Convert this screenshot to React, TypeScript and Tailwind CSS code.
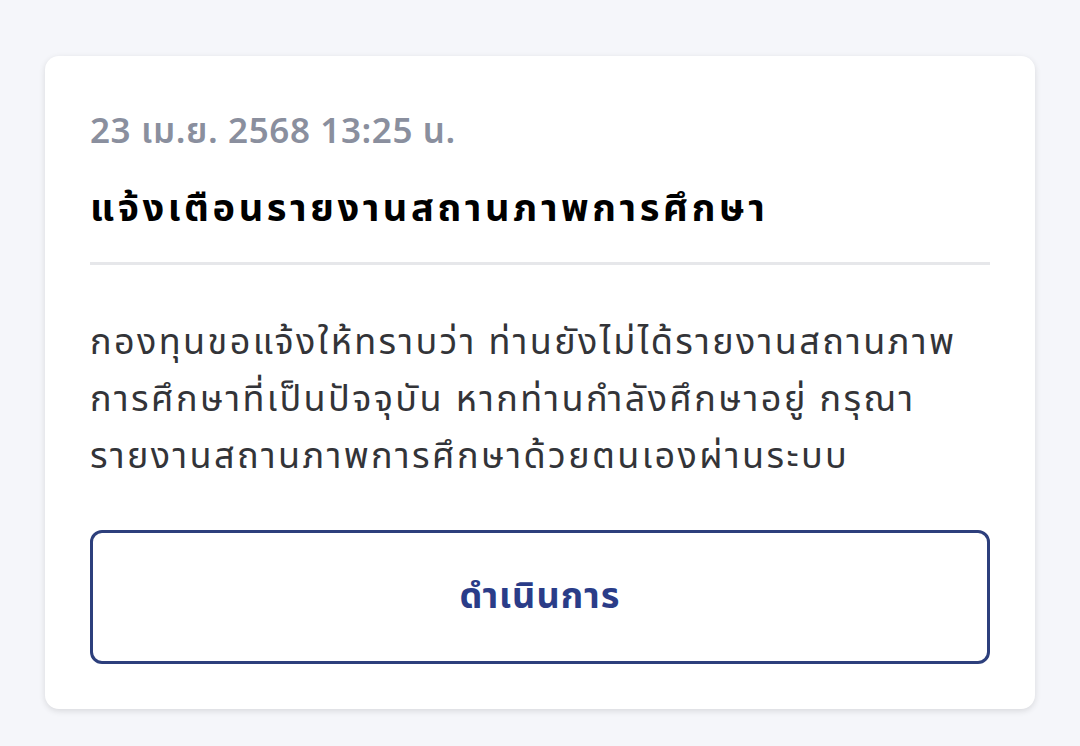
export default function App() {
  return (
    <div className="min-h-[746px] w-full bg-[#f5f6fa] px-[45px] pt-[56px] font-['Noto_Sans_Thai','Noto_Sans',sans-serif]">
      <div className="rounded-[14px] bg-white px-[45px] pb-[45px] pt-[54px] shadow-[0_2px_6px_rgba(0,0,0,0.12)]">
        <div className="text-[35px] font-semibold leading-[46px] tracking-[0.6px] text-[#8a8f9e]">23 เม.ย. 2568 13:25 น.</div>
        <div className="mt-[30px] text-[38px] font-bold leading-[48px] tracking-[3.6px] text-black">แจ้งเตือนรายงานสถานภาพการศึกษา</div>
        <div className="mt-[28px] h-[3px] bg-[#e6e7ea]" />
        <p className="mt-[50px] whitespace-nowrap text-[36px] leading-[57px] tracking-[2.4px] text-[#333438]">
          กองทุนขอแจ้งให้ทราบว่า ท่านยังไม่ได้รายงานสถานภาพ
          <br />
          การศึกษาที่เป็นปัจจุบัน หากท่านกำลังศึกษาอยู่ กรุณา
          <br />
          รายงานสถานภาพการศึกษาด้วยตนเองผ่านระบบ
        </p>
        <button className="mt-[44px] flex h-[134px] w-full items-center justify-center rounded-[12px] border-[3px] border-[#2d3f7c] text-[36px] font-bold tracking-[1px] text-[#2a3c88]">
          ดำเนินการ
        </button>
      </div>
    </div>
  )
}
